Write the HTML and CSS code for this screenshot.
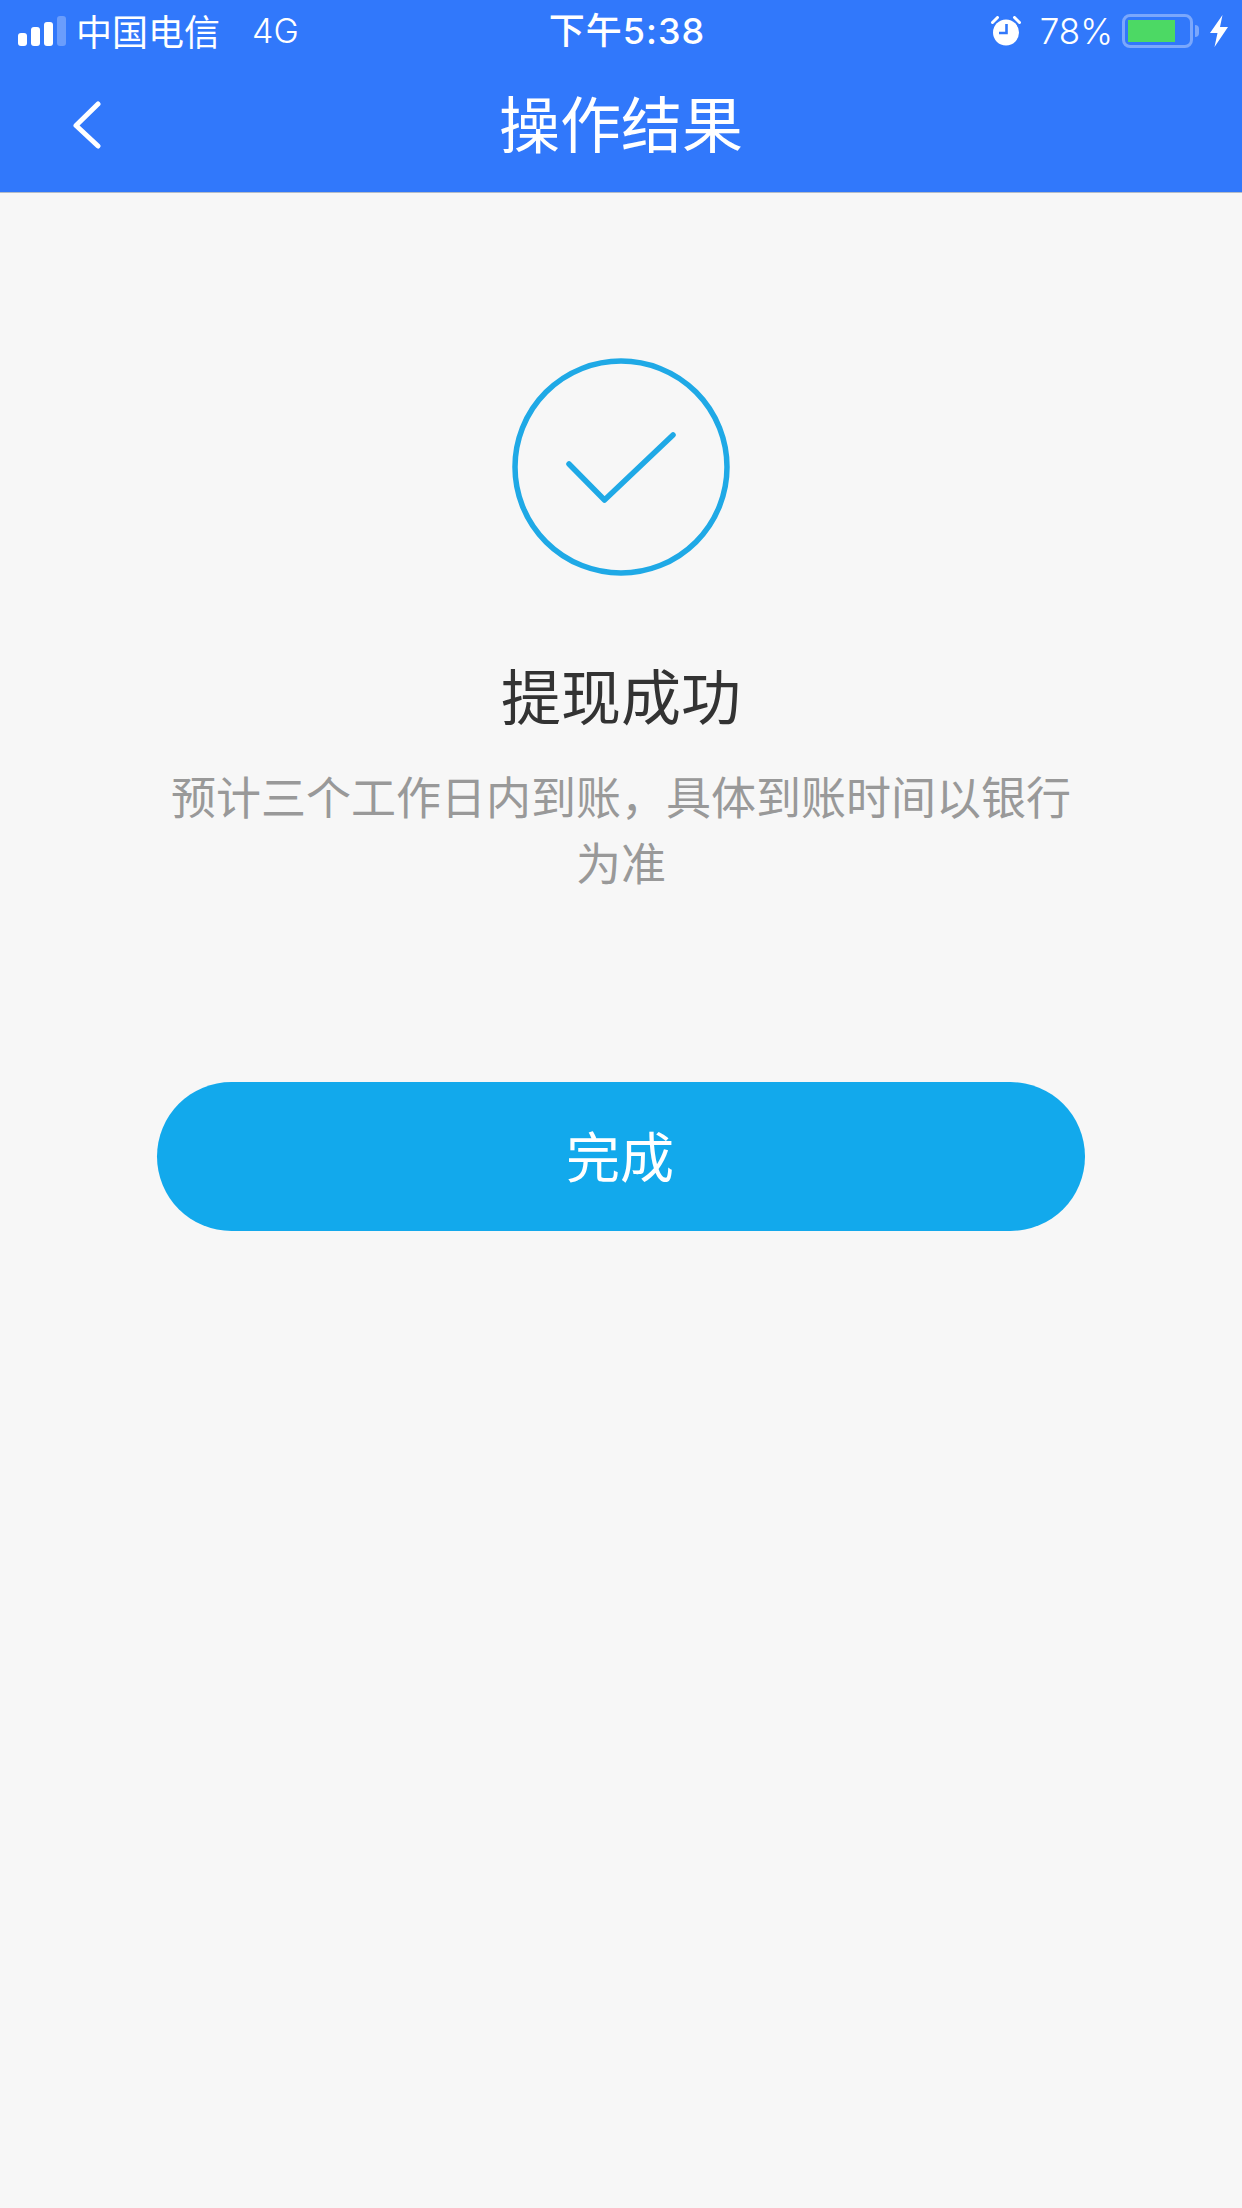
FILE: index.html
```html
<!DOCTYPE html>
<html lang="zh-CN">
<head>
    <meta charset="UTF-8">
    <meta name="viewport" content="width=device-width, initial-scale=1.0">
    <title>操作结果</title>
    <link rel="stylesheet" href="styles.css">
</head>
<body>
    <header class="top">
        <div class="status-bar">
            <div class="status-left">
                <div class="signal">
                    <span class="bar bar-1"></span>
                    <span class="bar bar-2"></span>
                    <span class="bar bar-3"></span>
                    <span class="bar bar-4"></span>
                </div>
                <span class="carrier">中国电信</span>
                <span class="network">4G</span>
            </div>
            <div class="status-time">下午5:38</div>
            <div class="status-right">
                <svg class="alarm" width="30" height="30" viewBox="0 0 30 30">
                    <circle cx="15" cy="16.5" r="13" fill="#fff"/>
                    <path d="M1.5 6.5 L6.5 1.5 M23.5 1.5 L28.5 6.5" stroke="#fff" stroke-width="3" stroke-linecap="round"/>
                    <path d="M15.5 8 V17 H8" fill="none" stroke="#3178fb" stroke-width="2.6"/>
                </svg>
                <span class="percent">78%</span>
                <div class="battery">
                    <div class="battery-body"><div class="battery-level"></div></div>
                    <span class="battery-tip"></span>
                </div>
                <svg class="bolt" width="18" height="32" viewBox="0 0 18 32">
                    <path d="M12.5 0 L0 18 H7.5 L4.5 32 L18 12 H10 Z" fill="#fff"/>
                </svg>
            </div>
        </div>
        <nav class="nav-bar">
            <a class="back" href="#">
                <svg width="30" height="48" viewBox="0 0 30 48">
                    <path d="M26 3 L4 24.5 L26 45" fill="none" stroke="#fff" stroke-width="5" stroke-linecap="round" stroke-linejoin="round"/>
                </svg>
            </a>
            <h1 class="nav-title">操作结果</h1>
        </nav>
    </header>

    <main class="result">
        <svg class="result-icon" width="218" height="218" viewBox="0 0 218 218">
            <circle cx="109" cy="109" r="106" fill="none" stroke="#1fa9e6" stroke-width="5.5"/>
            <path d="M57 106 L92.5 142 L161 77" fill="none" stroke="#1fa9e6" stroke-width="5.5" stroke-linecap="round" stroke-linejoin="round"/>
        </svg>
        <h2 class="result-title">提现成功</h2>
        <p class="result-desc">预计三个工作日内到账，具体到账时间以银行为准</p>
        <button class="done-btn" type="button">完成</button>
    </main>
</body>
</html>
```

FILE: styles.css
```css
* {
    box-sizing: border-box;
}
html, body {
    height: 100%;
}
body {
    margin: 0;
    background-color: #f7f7f7;
    font-family: "Noto Sans CJK SC", "Noto Sans", sans-serif;
}
.top {
    height: 193px;
    background-color: #3178fb;
    border-bottom: 1px solid #b4bcc8;
    color: #fff;
}
.status-bar {
    height: 64px;
    padding: 0 14px 2px 18px;
    display: grid;
    grid-template-columns: 1fr auto 1fr;
    align-items: center;
}
.status-left, .status-right {
    display: flex;
    align-items: center;
}
.status-right {
    justify-content: flex-end;
}
.signal {
    display: flex;
    align-items: flex-end;
    gap: 4px;
    height: 30px;
    margin-right: 10px;
}
.bar {
    width: 9px;
    background-color: #fff;
    border-radius: 3px;
}
.bar-1 { height: 13px; }
.bar-2 { height: 19px; }
.bar-3 { height: 24px; }
.bar-4 { height: 30px; background-color: #6a9dfc; }
.carrier {
    font-size: 36px;
    line-height: 44px;
    margin-top: -2px;
}
.network {
    font-family: "Inter", "Noto Sans", sans-serif;
    font-size: 34px;
    line-height: 44px;
    margin-left: 32px;
    font-weight: 300;
}
.status-time {
    margin-left: 8px;
    font-size: 36px;
    line-height: 44px;
    letter-spacing: 1px;
    font-family: "Inter", "Noto Sans CJK SC", sans-serif;
    font-weight: 500;
}
.alarm {
    margin-right: 19px;
}
.percent {
    font-family: "Inter", "Noto Sans", sans-serif;
    font-size: 35px;
    line-height: 44px;
    font-weight: 300;
    margin-right: 9px;
}
.battery {
    display: flex;
    align-items: center;
    margin-right: 11px;
}
.battery-body {
    width: 71px;
    height: 34px;
    padding: 3px;
    border: 3px solid #7aa7fc;
    border-radius: 8px;
}
.battery-level {
    width: 47px;
    height: 100%;
    background-color: #4cd964;
}
.battery-tip {
    width: 4px;
    height: 12px;
    margin-left: 2px;
    background-color: #7aa7fc;
    border-radius: 0 6px 6px 0;
}
.nav-bar {
    position: relative;
    height: 128px;
    display: flex;
    align-items: center;
    justify-content: center;
}
.back {
    position: absolute;
    left: 72px;
    top: 37px;
    line-height: 0;
}
.nav-title {
    margin: 0 0 12px;
    font-size: 61px;
    line-height: 80px;
    font-weight: 400;
}
.result {
    display: flex;
    flex-direction: column;
    align-items: center;
    padding-top: 165px;
}
.result-title {
    margin: 76px 0 0;
    font-size: 60px;
    line-height: 84px;
    font-weight: 400;
    color: #333;
}
.result-desc {
    width: 930px;
    margin: 27px 0 0;
    font-size: 45px;
    line-height: 66px;
    text-align: center;
    color: #999;
}
.done-btn {
    width: 928px;
    height: 149px;
    margin-top: 187px;
    padding: 0 2px 5px 0;
    border: none;
    border-radius: 75px;
    background-color: #12a9ec;
    color: #fff;
    font-family: inherit;
    font-size: 54px;
    cursor: pointer;
}
```
